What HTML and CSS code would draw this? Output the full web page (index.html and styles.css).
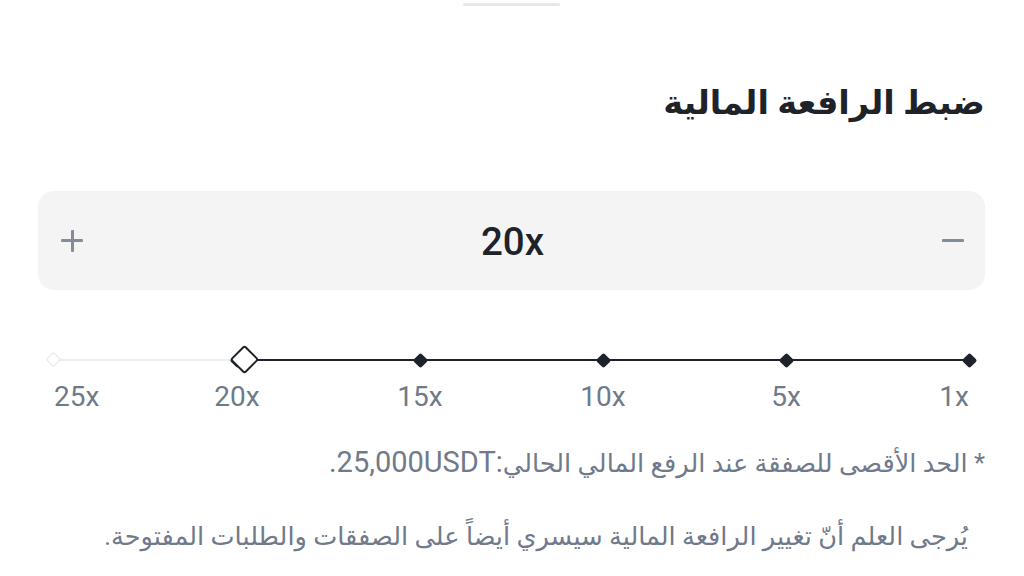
FILE: index.html
```html
<!DOCTYPE html>
<html lang="ar">
<head>
<meta charset="utf-8">
<link rel="stylesheet" href="styles.css">
</head>
<body>
<div class="sheet">
  <div class="handle"></div>
  <h1 class="title" dir="rtl">ضبط الرافعة المالية</h1>
  <div class="stepper">
    <span class="btn plus"></span>
    <span class="value">20x</span>
    <span class="btn minus"></span>
  </div>
  <div class="slider">
    <div class="track">
      <div class="line"></div>
      <div class="marks">
        <span class="mark off"></span>
        <span class="mark"></span>
        <span class="mark"></span>
        <span class="mark"></span>
        <span class="mark"></span>
        <span class="mark"></span>
      </div>
      <span class="thumb" style="left: 20.87%"></span>
    </div>
    <div class="labels">
      <span class="lab first"><span>25x</span></span>
      <span class="lab"><span>20x</span></span>
      <span class="lab"><span>15x</span></span>
      <span class="lab"><span>10x</span></span>
      <span class="lab"><span>5x</span></span>
      <span class="lab last"><span>1x</span></span>
    </div>
  </div>
  <p class="note star" dir="rtl">* الحد الأقصى للصفقة عند الرفع المالي الحالي<span class="latin">:25,000USDT.</span></p>
  <p class="note indent" dir="rtl">يُرجى العلم أنّ تغيير الرافعة المالية سيسري أيضاً على الصفقات والطلبات المفتوحة.</p>
</div>
</body>
</html>
```
FILE: styles.css
```css
html, body {
  margin: 0;
  padding: 0;
  background: #ffffff;
}
body {
  font-family: Roboto, "DejaVu Sans", sans-serif;
  color: #1e2329;
  width: 1024px;
  height: 576px;
  overflow: hidden;
}
.sheet {
  padding: 0 39px 0 38px;
}
.handle {
  width: 97px;
  height: 3px;
  border-radius: 2px;
  background: #e6e8eb;
  margin: 3px auto 0;
}
.title {
  margin: 75px 0 0;
  font-size: 33.5px;
  line-height: 44px;
  font-weight: 700;
  text-align: right;
  color: #1e2329;
}
.stepper {
  margin-top: 66px;
  height: 99px;
  border-radius: 16px;
  background: #f4f4f4;
  display: flex;
  align-items: center;
  justify-content: space-between;
  padding: 0 21px 0 23px;
}
.btn {
  width: 22px;
  height: 22px;
  position: relative;
}
.btn::before, .plus::after {
  content: "";
  position: absolute;
  left: 0;
  right: 0;
  top: 50%;
  height: 3px;
  margin-top: -1.5px;
  background: #858c99;
  border-radius: 1px;
}
.plus::after {
  left: 50%;
  right: auto;
  width: 3px;
  margin-left: -1.5px;
  top: 0;
  bottom: 0;
  height: auto;
  margin-top: 0;
}
.value {
  font-size: 38.5px;
  line-height: 46px;
  font-weight: 500;
  color: #1e2329;
  margin-top: 3px;
}
.slider {
  margin-top: 55px;
  padding: 0 16px;
}
.track {
  position: relative;
  height: 30px;
}
.line {
  position: absolute;
  left: 0;
  right: 0;
  top: 14px;
  height: 2px;
  background: linear-gradient(to right, #eaecef 0, #eaecef 20.87%, #1e2329 20.87%, #1e2329 100%);
}
.marks {
  position: absolute;
  left: 0;
  right: 0;
  top: 15px;
  display: flex;
  justify-content: space-between;
}
.mark {
  width: 0;
  height: 0;
  position: relative;
}
.mark::before {
  content: "";
  position: absolute;
  width: 11px;
  height: 11px;
  left: -5.5px;
  top: -5.5px;
  background: #1e2329;
  border-radius: 2px;
  transform: rotate(45deg);
}
.mark.off::before {
  width: 9px;
  height: 9px;
  left: -6px;
  top: -6px;
  background: #ffffff;
  border: 1.5px solid #e4e6ea;
  border-radius: 1.5px;
}
.thumb {
  position: absolute;
  top: 15px;
  width: 17px;
  height: 17px;
  margin-left: -11px;
  margin-top: -11px;
  background: #ffffff;
  border: 2.5px solid #1e2329;
  border-radius: 3px;
  transform: rotate(45deg);
}
.labels {
  margin-top: 6px;
  display: flex;
  justify-content: space-between;
  font-size: 28px;
  line-height: 32px;
  color: #707a8a;
}
.lab {
  width: 0;
  display: flex;
  justify-content: center;
  white-space: nowrap;
}
.lab.first { justify-content: flex-start; }
.lab.last { justify-content: flex-end; }
.note {
  margin: 31px 0 0;
  font-size: 25.6px;
  line-height: 36px;
  color: #707a8a;
  text-align: right;
  white-space: nowrap;
}
.latin {
  font-size: 29px;
}
.note.indent {
  margin-top: 37px;
  padding-right: 17px;
}
```
